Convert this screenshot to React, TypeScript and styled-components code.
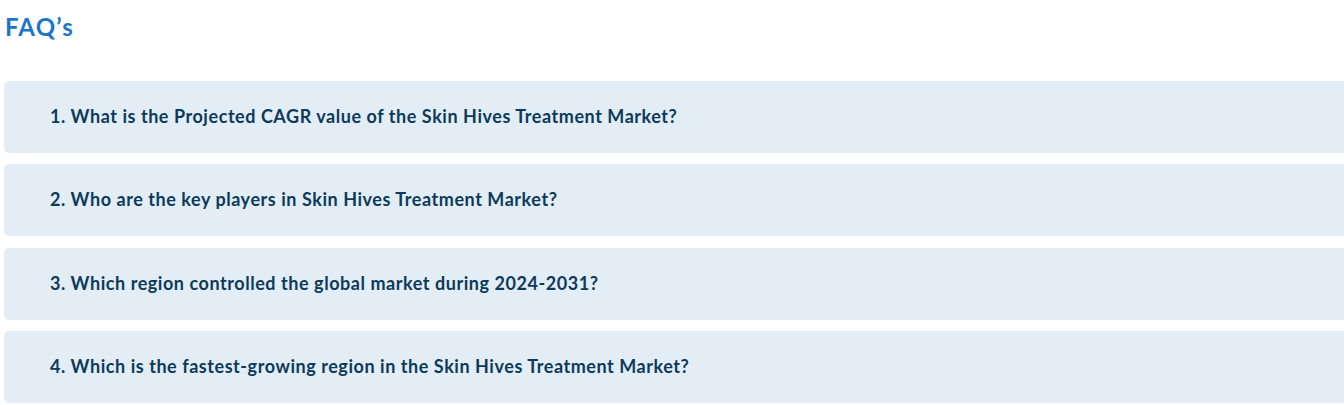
import React from "react";
import styled, { createGlobalStyle } from "styled-components";

const GlobalStyle = createGlobalStyle`
  html, body {
    margin: 0;
    padding: 0;
    background: #ffffff;
    overflow: hidden;
  }
  body {
    font-family: Lato, "Open Sans", Arial, sans-serif;
  }
`;

const SSection = styled.section`
  display: flex;
  flex-direction: column;
  padding: 11px 0 0 4px;
  width: 1360px;
`;

const STitle = styled.h2`
  margin: 0 0 0 1px;
  font-size: 24px;
  line-height: 32px;
  font-weight: 700;
  letter-spacing: 1.2px;
  color: #1b75c9;
`;

const SList = styled.div`
  display: flex;
  flex-direction: column;
  gap: 11.3px;
  margin-top: 38px;
`;

const SItem = styled.div`
  display: flex;
  align-items: center;
  height: 72px;
  padding-left: 46px;
  background: #e2edf6;
  border-radius: 5px;
`;

const SQuestion = styled.span`
  font-size: 18px;
  font-weight: 700;
  letter-spacing: 0.55px;
  color: #0e3a5a;
  margin-top: -2px;
`;

const questions = [
  "1. What is the Projected CAGR value of the Skin Hives Treatment Market?",
  "2. Who are the key players in Skin Hives Treatment Market?",
  "3. Which region controlled the global market during 2024-2031?",
  "4. Which is the fastest-growing region in the Skin Hives Treatment Market?",
];

const App: React.FC = () => {
  return (
    <>
      <GlobalStyle />
      <SSection>
        <STitle>FAQ’s</STitle>
        <SList>
          {questions.map((q) => (
            <SItem key={q}>
              <SQuestion>{q}</SQuestion>
            </SItem>
          ))}
        </SList>
      </SSection>
    </>
  );
};

export default App;
